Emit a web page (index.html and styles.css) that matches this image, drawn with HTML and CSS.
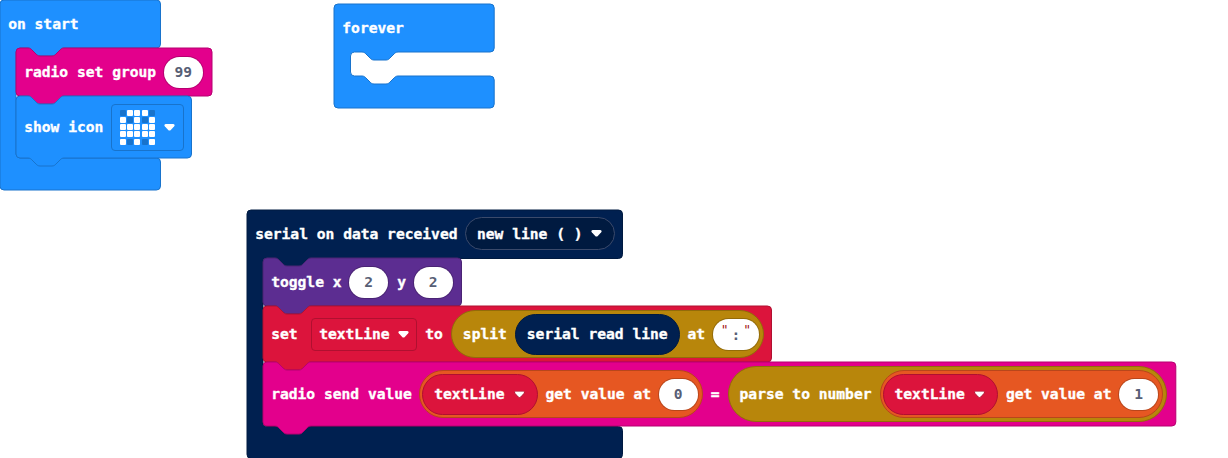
FILE: index.html
```html
<!DOCTYPE html>
<html lang="en">
<head>
<meta charset="utf-8">
<title>Blocks workspace</title>
<link rel="stylesheet" href="styles.css">
</head>
<body>
<svg class="defs" aria-hidden="true">
  <symbol id="caret" viewBox="0 0 11 7"><path d="M1.7 .1H9.3Q11.4 .5 10.2 2.2L6.8 6Q5.5 7.2 4.2 6L.8 2.2Q-.4 .5 1.7 .1Z" fill="#fff"/></symbol>
</svg>
<main class="workspace">

  <section class="stack stack-start">
    <svg class="shape blue"><path d="M0,4 a4,4 0 0 1 4,-4 H156.5 a4,4 0 0 1 4,4 V44 a4,4 0 0 1 -4,4 H64 c-2,0 -3,1 -4,2 l-4,4 c-1,1 -2,2 -4,2 h-12 c-2,0 -3,-1 -4,-2 l-4,-4 c-1,-1 -2,-2 -4,-2 H20 a4,4 0 0 0 -4,4 V154 a4,4 0 0 0 4,4 H156.5 a4,4 0 0 1 4,4 V186 a4,4 0 0 1 -4,4 H4 a4,4 0 0 1 -4,-4 Z"/></svg>
    <header class="row head"><span>on start</span></header>
    <div class="body">
      <div class="row h48">
        <svg class="shape magenta"><path d="M0,4 a4,4 0 0 1 4,-4 H12 c2,0 3,1 4,2 l4,4 c1,1 2,2 4,2 h12 c2,0 3,-1 4,-2 l4,-4 c1,-1 2,-2 4,-2 H192 a4,4 0 0 1 4,4 V44 a4,4 0 0 1 -4,4 H48 c-2,0 -3,1 -4,2 l-4,4 c-1,1 -2,2 -4,2 h-12 c-2,0 -3,-1 -4,-2 l-4,-4 c-1,-1 -2,-2 -4,-2 H4 a4,4 0 0 1 -4,-4 Z"/></svg>
        <span>radio set group</span><span class="num on-magenta">99</span>
      </div>
      <div class="row h62">
        <svg class="shape blue"><path d="M0,4 a4,4 0 0 1 4,-4 H12 c2,0 3,1 4,2 l4,4 c1,1 2,2 4,2 h12 c2,0 3,-1 4,-2 l4,-4 c1,-1 2,-2 4,-2 H171.5 a4,4 0 0 1 4,4 V58 a4,4 0 0 1 -4,4 H48 c-2,0 -3,1 -4,2 l-4,4 c-1,1 -2,2 -4,2 h-12 c-2,0 -3,-1 -4,-2 l-4,-4 c-1,-1 -2,-2 -4,-2 H4 a4,4 0 0 1 -4,-4 Z"/></svg>
        <span>show icon</span>
        <span class="field icon-field">
          <span class="leds"><i class="off"></i><i></i><i></i><i></i><i class="off"></i><i></i><i class="off"></i><i></i><i class="off"></i><i></i><i></i><i></i><i></i><i></i><i></i><i></i><i></i><i></i><i></i><i></i><i></i><i class="off"></i><i></i><i class="off"></i><i></i></span>
          <svg class="caret"><use href="#caret"/></svg>
        </span>
      </div>
    </div>
  </section>

  <section class="stack stack-forever">
    <svg class="shape blue"><path d="M0,4 a4,4 0 0 1 4,-4 H156.2 a4,4 0 0 1 4,4 V44 a4,4 0 0 1 -4,4 H64 c-2,0 -3,1 -4,2 l-4,4 c-1,1 -2,2 -4,2 h-12 c-2,0 -3,-1 -4,-2 l-4,-4 c-1,-1 -2,-2 -4,-2 H20.5 a4,4 0 0 0 -4,4 V68 a4,4 0 0 0 4,4 H28 c2,0 3,1 4,2 l4,4 c1,1 2,2 4,2 h12 c2,0 3,-1 4,-2 l4,-4 c1,-1 2,-2 4,-2 H156.2 a4,4 0 0 1 4,4 V100 a4,4 0 0 1 -4,4 H4 a4,4 0 0 1 -4,-4 Z"/></svg>
    <header class="row head"><span>forever</span></header>
  </section>

  <section class="stack stack-serial">
    <svg class="shape navy"><path d="M0,4 a4,4 0 0 1 4,-4 H371.5 a4,4 0 0 1 4,4 V44.5 a4,4 0 0 1 -4,4 H64 c-2,0 -3,1 -4,2 l-4,4 c-1,1 -2,2 -4,2 h-12 c-2,0 -3,-1 -4,-2 l-4,-4 c-1,-1 -2,-2 -4,-2 H20 a4,4 0 0 0 -4,4 V212.5 a4,4 0 0 0 4,4 H371.5 a4,4 0 0 1 4,4 V244.5 a4,4 0 0 1 -4,4 H4 a4,4 0 0 1 -4,-4 Z"/></svg>
    <header class="row head"><span>serial on data received</span>
      <span class="menu">new line ( )<svg class="caret"><use href="#caret"/></svg></span>
    </header>
    <div class="body">
      <div class="row h48">
        <svg class="shape purple"><path d="M0,4 a4,4 0 0 1 4,-4 H12 c2,0 3,1 4,2 l4,4 c1,1 2,2 4,2 h12 c2,0 3,-1 4,-2 l4,-4 c1,-1 2,-2 4,-2 H194.5 a4,4 0 0 1 4,4 V44 a4,4 0 0 1 -4,4 H48 c-2,0 -3,1 -4,2 l-4,4 c-1,1 -2,2 -4,2 h-12 c-2,0 -3,-1 -4,-2 l-4,-4 c-1,-1 -2,-2 -4,-2 H4 a4,4 0 0 1 -4,-4 Z"/></svg>
        <span>toggle x</span><span class="num on-purple">2</span><span>y</span><span class="num on-purple">2</span>
      </div>
      <div class="row h56">
        <svg class="shape red"><path d="M0,4 a4,4 0 0 1 4,-4 H12 c2,0 3,1 4,2 l4,4 c1,1 2,2 4,2 h12 c2,0 3,-1 4,-2 l4,-4 c1,-1 2,-2 4,-2 H504.5 a4,4 0 0 1 4,4 V52 a4,4 0 0 1 -4,4 H48 c-2,0 -3,1 -4,2 l-4,4 c-1,1 -2,2 -4,2 h-12 c-2,0 -3,-1 -4,-2 l-4,-4 c-1,-1 -2,-2 -4,-2 H4 a4,4 0 0 1 -4,-4 Z"/></svg>
        <span class="word">set</span>
        <span class="field var-field">textLine<svg class="caret"><use href="#caret"/></svg></span>
        <span>to</span>
        <span class="pill gold h48">
          <span>split</span><span class="pill navy h40">serial read line</span><span>at</span>
          <span class="num string on-gold"><span class="quote">"</span><span class="colon">:</span><span class="quote">"</span></span>
        </span>
      </div>
      <div class="row h64">
        <svg class="shape magenta"><path d="M0,4 a4,4 0 0 1 4,-4 H12 c2,0 3,1 4,2 l4,4 c1,1 2,2 4,2 h12 c2,0 3,-1 4,-2 l4,-4 c1,-1 2,-2 4,-2 H908.8 a4,4 0 0 1 4,4 V60 a4,4 0 0 1 -4,4 H48 c-2,0 -3,1 -4,2 l-4,4 c-1,1 -2,2 -4,2 h-12 c-2,0 -3,-1 -4,-2 l-4,-4 c-1,-1 -2,-2 -4,-2 H4 a4,4 0 0 1 -4,-4 Z"/></svg>
        <span>radio send value</span>
        <span class="pill orange h48">
          <span class="pill red h40">textLine<svg class="caret"><use href="#caret"/></svg></span>
          <span>get value at</span><span class="num on-orange">0</span>
        </span>
        <span>=</span>
        <span class="pill gold h56">
          <span>parse to number</span>
          <span class="pill orange h48">
            <span class="pill red h40">textLine<svg class="caret"><use href="#caret"/></svg></span>
            <span>get value at</span><span class="num on-orange">1</span>
          </span>
        </span>
      </div>
    </div>
  </section>

</main>
</body>
</html>
```
FILE: styles.css
```css
* { box-sizing: border-box; }

body {
  margin: 0;
  background: #fff;
  overflow: hidden;
}

.defs { position: absolute; width: 0; height: 0; }

.workspace {
  position: relative;
  width: 1228px;
  height: 458px;
  overflow: hidden;
  color: #fff;
  font: bold 14.62px/20px "DejaVu Sans Mono", "Liberation Mono", monospace;
  white-space: nowrap;
  -webkit-text-stroke: 0.35px;
}

/* Stacks sit freely on the canvas */
.stack { position: absolute; }
.stack-start { left: 0.2px; top: 0.2px; }
.stack-forever { left: 334.3px; top: 4px; }
.stack-serial { left: 247.2px; top: 209.7px; }

.shape {
  position: absolute;
  left: 0;
  top: 0;
  width: 1px;
  height: 1px;
  overflow: visible;
  z-index: -1;
  stroke-width: 1;
}
.stack, .row { isolation: isolate; }

.row {
  position: relative;
  display: flex;
  align-items: center;
  gap: 8px;
  width: max-content;
  padding: 0 8px;
}
.head { height: 48px; }
.stack-serial .head { height: 48.5px; }
.body { padding-left: 16px; }
.h40 { height: 41px; }
.h48 { height: 48px; }
.h56 { height: 56px; }
.h62 { height: 62px; }
.h64 { height: 64px; }
.word { min-width: 32px; }

.blue { fill: #1e90ff; stroke: #1873cc; }
.magenta { fill: #e3008c; stroke: #b60070; }
.purple { fill: #5c2d91; stroke: #4a2474; }
.red { fill: #dc143c; stroke: #b01030; }
.navy { fill: #002050; stroke: #001a40; }

.pill {
  display: flex;
  align-items: center;
  gap: 8px;
  border: 1px solid;
  border-radius: 28px;
  padding: 0 11px;
}
.pill.gold { background: #b8860b; border-color: #936b09; padding-right: 3px; }
.pill.orange { background: #e65722; border-color: #b8461b; padding: 0 3px 0 2px; }
.row > .pill.orange { margin-left: -0.8px; }
.pill.red { background: #dc143c; border-color: #b01030; gap: 9px; padding-right: 12px; }
.pill.navy { background: #002050; border-color: #001a40; }

.caret { width: 11px; height: 7px; flex: none; }

.num {
  display: flex;
  align-items: center;
  justify-content: center;
  width: 39px;
  height: 31px;
  margin: 0 1px 0 -0.3px;
  border-radius: 16px;
  background: #fff;
  color: #575e75;
  -webkit-text-stroke: 0;
}
.on-magenta { box-shadow: 0 0 0 1px #b60070; }
.on-purple { box-shadow: 0 0 0 1px #4a2474; }
.on-gold { box-shadow: 0 0 0 1px #936b09; }
.on-orange { box-shadow: 0 0 0 1px #b8461b; }

.string { width: 46px; gap: 3px; }
.quote {
  color: #a31515;
  font-weight: normal;
  font-size: 13px;
  padding-bottom: 8px;
}
.colon { padding-top: 1px; }

.field {
  display: flex;
  align-items: center;
  gap: 9px;
  border: 1px solid;
  border-radius: 4px;
  padding: 0 8px 0 7px;
}
.var-field { height: 33px; gap: 8.5px; padding-right: 7.2px; border-color: #b01030; }
.icon-field { width: 73px; height: 47px; padding-left: 8px; border-color: #1873cc; }

.leds {
  display: grid;
  grid-template-columns: repeat(5, 6px);
  grid-auto-rows: 6px;
  gap: 1.2px;
  margin-left: -0.3px;
}
.leds i { background: #fff; border-radius: 1px; }
.leds .off { background: #1873cc; }

.menu {
  display: flex;
  align-items: center;
  gap: 8px;
  height: 33px;
  margin-left: -1px;
  padding: 0 12px 0 11.5px;
  border: 1px solid #3b4a6b;
  border-radius: 17px;
  background: #001a40;
}
```
